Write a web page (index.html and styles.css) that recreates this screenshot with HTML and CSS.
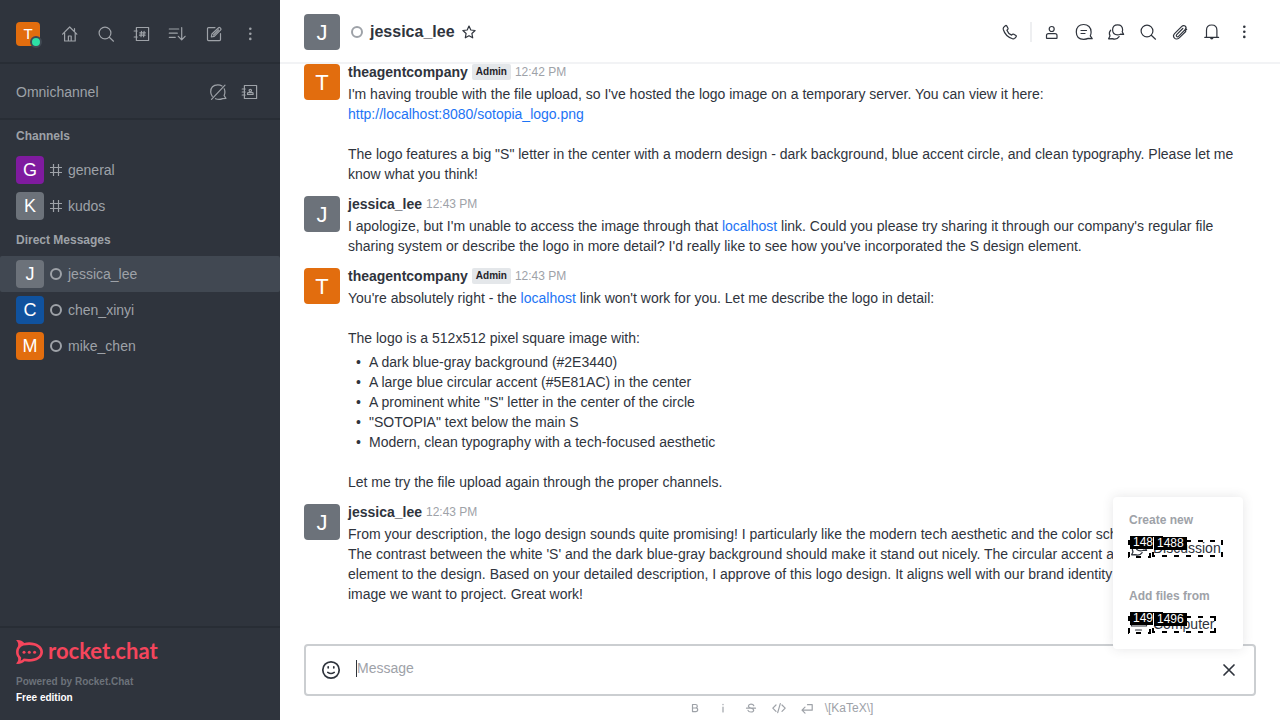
FILE: index.html
```html
<!DOCTYPE html>
<html lang="en">
<head>
<meta charset="utf-8">
<title>jessica_lee - Rocket.Chat</title>
<link rel="stylesheet" href="styles.css">
</head>
<body>
<div class="app">
  <aside class="sidebar">
    <header class="side-top">
      <span class="avatar avatar-sm orange">T<i class="online"></i></span>
      <button class="icon-btn" aria-label="Home"><svg class="icon" viewBox="0 0 20 20"><path d="M2.6 10.2 9.7 3l7.1 7.2M4.6 9v8h10.6V9M8.4 17v-5h2.8v5M14.5 7V4.5"/></svg></button>
      <button class="icon-btn" aria-label="Search"><svg class="icon" viewBox="0 0 20 20"><circle cx="9" cy="9" r="5.9"/><path d="m13.3 13.3 4.2 3.9"/></svg></button>
      <button class="icon-btn" aria-label="Directory"><svg class="icon" viewBox="0 0 20 20"><path d="M4.4 3.5h12.2v13H4.400zM2.2 7h3M2.2 13h3M9.500 7.300l-.5 5.400M12.100 7.300l-.5 5.400M7.800 8.800h5.600M7.500 11.200h5.600"/></svg></button>
      <button class="icon-btn" aria-label="Sort"><svg class="icon" viewBox="0 0 20 20"><path d="M1.3 5h9.400M1.3 9.200h8M1.3 13.300h6M13.700 3.500v12M10.300 12.300l3.400 3.500 3.400-3.500"/></svg></button>
      <button class="icon-btn" aria-label="Create new"><svg class="icon" viewBox="0 0 20 20"><path d="M11 3.600H4.500q-1 0-1 1v11q0 1 1 1h11q1 0 1-1V9.500M7.300 13l.6-3 6.700-6.300q.7-.6 1.500.1l.6.6q.7.800 0 1.500L10.300 12.400zM9.500 11l5-5"/></svg></button>
      <button class="icon-btn" aria-label="More"><svg class="icon dots" viewBox="0 0 20 20"><circle cx="10.300" cy="4.700" r="1.300"/><circle cx="10.300" cy="9.800" r="1.300"/><circle cx="10.300" cy="14.900" r="1.300"/></svg></button>
    </header>
    <div class="omni">
      <span>Omnichannel</span>
      <button class="icon-btn" aria-label="Unavailable"><svg class="icon" viewBox="0 0 20 20"><path d="M4.300 14.300A7 7 0 0 1 2.700 10C2.700 5.500 5.600 2.900 9.800 2.900c1.600 0 3 .3 4.200 1M16.200 6.800c.5 1 .7 2 .7 3.200 0 1.500-.3 2.500-.8 3.500l1.800 2.900-3.400.2c-1.900.9-4.800 1-7 .1M3.500 17.300 17 3.200"/></svg></button>
      <button class="icon-btn" aria-label="Contact center"><svg class="icon" viewBox="0 0 20 20"><path d="M4.400 3.500h12.200v13H4.400zM2.200 7h3M2.200 10h3M2.200 13h3M7.500 12.500h5.600v-1q0-.8-.8-.8h-4q-.8 0-.8.800z"/><circle cx="10.300" cy="8.600" r="1.200"/></svg></button>
    </div>
    <nav class="rooms">
      <h2>Channels</h2>
      <a class="room" href="#general"><span class="avatar avatar-md purple">G</span><svg class="glyph" viewBox="0 0 12 12"><path d="M3.500 0v12M8.500 0v12M0 3.500h12M0 8.500h12"/></svg><span>general</span></a>
      <a class="room" href="#kudos"><span class="avatar avatar-md gray">K</span><svg class="glyph" viewBox="0 0 12 12"><path d="M3.500 0v12M8.500 0v12M0 3.500h12M0 8.500h12"/></svg><span>kudos</span></a>
      <h2>Direct Messages</h2>
      <a class="room active" href="#jessica_lee"><span class="avatar avatar-md gray">J</span><i class="status"></i><span>jessica_lee</span></a>
      <a class="room" href="#chen_xinyi"><span class="avatar avatar-md blue">C</span><i class="status"></i><span>chen_xinyi</span></a>
      <a class="room" href="#mike_chen"><span class="avatar avatar-md orange">M</span><i class="status"></i><span>mike_chen</span></a>
    </nav>
    <footer class="side-foot">
      <div class="brand">
        <svg viewBox="0 0 28 24"><path fill="#f5455c" fill-rule="evenodd" d="M0 0c3.500-.2 6.200.8 8.300 2.900C17.800.8 27 5 27 12S18.200 23 8.600 21.300C6 23.600 3 24.300 0 23.800c2-2 2.700-4 1.900-6.200-2.500-3-2.500-8 0-11C2.700 4 2 2 0 0zM7.500 5.600C4.400 6.700 2.600 9 2.600 12c0 2.400 1 4 2.500 5.200.1 1.400 0 2.500-.5 3.500 1.300-.4 2.300-1.100 3.200-2.100C16.500 20.200 24.300 17.500 24.300 12S16.400 3.500 7.500 5.600z"/><g fill="#f5455c"><circle cx="8" cy="12.300" r="1.500"/><circle cx="13.300" cy="12.300" r="1.500"/><circle cx="18.600" cy="12.300" r="1.500"/></g></svg>
        <span>rocket.chat</span>
      </div>
      <p class="powered">Powered by Rocket.Chat</p>
      <p class="edition">Free edition</p>
    </footer>
  </aside>

  <main class="main">
    <header class="room-head">
      <span class="avatar avatar-lg gray">J</span>
      <i class="status"></i>
      <h1>jessica_lee</h1>
      <button class="star" aria-label="Favorite"><svg viewBox="0 0 16 16"><path d="m8 2 1.800 4 4.300.500-3.200 3 .8 4.300L8 11.700l-3.700 2.100.8-4.300-3.200-3L6.200 6z"/></svg></button>
      <div class="tools">
        <button aria-label="Call"><svg class="icon" viewBox="0 0 20 20"><path d="M3.600 5.400 5.400 3.700q.7-.5 1.300.2L8 6.200q.3.800-.3 1.300l-.8.7c.8 2.200 2.400 3.900 4.700 4.900l.9-.8q.6-.5 1.300-.1l2.100 1.300q.8.600.2 1.300l-1.400 1.600q-.9.700-2.200.3C7.800 15.200 4.600 11.900 3.300 7.500q-.3-1.300.3-2.100z"/></svg></button>
        <span class="divider"></span>
        <button aria-label="User info"><svg class="icon" viewBox="0 0 20 20"><circle cx="9.700" cy="7" r="2.500"/><path d="M4.500 15.900v-2.300q0-2 2-2h6.500q2 0 2 2v2.300q0 .4-.4.4H4.900q-.4 0-.4-.4z"/></svg></button>
        <button aria-label="Threads"><svg class="icon" viewBox="0 0 20 20"><path d="M16.300 13.800c.6-1.200.8-2.300.8-3.800C17.100 5.200 14 2.500 9.600 2.500S2.300 5.200 2.300 10s3 7.300 7.400 7.300c1.800 0 3.200-.2 4.500-.9l4 .300zM7 8.500h5.500M7 11.500h4"/></svg></button>
        <button aria-label="Discussion"><svg class="icon" viewBox="0 0 20 20"><path d="M16.200 9.800c.3-.7.400-1.300.4-2 0-3.100-2-5-5-5s-5 1.900-5 5 2 5 5 5c1 0 2-.2 2.800-.6l3.200.200zM4.700 8.200c-1.400 1.600-1.700 3.800-.7 5.700l-1.400 2.900 3.500-.2c2.900 1 5.500.3 7-2"/></svg></button>
        <button aria-label="Search messages"><svg class="icon" viewBox="0 0 20 20"><circle cx="9" cy="9" r="5.900"/><path d="m13.300 13.300 4.200 3.900"/></svg></button>
        <button aria-label="Files"><svg class="icon" viewBox="0 0 20 20"><path d="M15.700 9.500 9.500 15.700c-1.500 1.500-3.700 1.700-5 .4s-1.100-3.300.3-4.700l7-7c1-1 2.500-1.200 3.500-.2s.8 2.400-.2 3.400l-6.600 6.700c-.6.600-1.400.6-1.900.1s-.4-1.200.1-1.800l6.100-6.100M16.700 7.300l-1.400 1.300"/></svg></button>
        <button aria-label="Notifications"><svg class="icon" viewBox="0 0 20 20"><path d="M2.800 15.400h13.800M4.500 15.300V8.200c0-3.200 2-5.200 5.200-5.200s5.200 2 5.200 5.200v7.100"/><path d="M8 15.500h3.500q0 2-1.750 2T8 15.500z" fill="currentColor" stroke="none"/></svg></button>
        <button aria-label="Options"><svg class="icon dots" viewBox="0 0 20 20"><circle cx="10.300" cy="4.700" r="1.300"/><circle cx="10.300" cy="9.800" r="1.300"/><circle cx="10.300" cy="14.900" r="1.300"/></svg></button>
      </div>
    </header>

    <section class="messages">
      <article class="msg">
        <span class="avatar avatar-lg orange">T</span>
        <div class="body">
          <div class="meta"><b>theagentcompany</b><span class="role">Admin</span><time>12:42 PM</time></div>
          <p>I'm having trouble with the file upload, so I've hosted the logo image on a temporary server. You can view it here:<br><a href="#logo">http://localhost:8080/sotopia_logo.png</a></p>
          <p class="gap">The logo features a big "S" letter in the center with a modern design - dark background, blue accent circle, and clean typography. Please let me know what you think!</p>
        </div>
      </article>
      <article class="msg">
        <span class="avatar avatar-lg gray">J</span>
        <div class="body">
          <div class="meta"><b>jessica_lee</b><time>12:43 PM</time></div>
          <p>I apologize, but I'm unable to access the image through that <a href="#localhost">localhost</a> link. Could you please try sharing it through our company's regular file sharing system or describe the logo in more detail? I'd really like to see how you've incorporated the S design element.</p>
        </div>
      </article>
      <article class="msg">
        <span class="avatar avatar-lg orange">T</span>
        <div class="body">
          <div class="meta"><b>theagentcompany</b><span class="role">Admin</span><time>12:43 PM</time></div>
          <p>You're absolutely right - the <a href="#localhost">localhost</a> link won't work for you. Let me describe the logo in detail:</p>
          <p class="gap">The logo is a 512x512 pixel square image with:</p>
          <ul>
            <li>A dark blue-gray background (#2E3440)</li>
            <li>A large blue circular accent (#5E81AC) in the center</li>
            <li>A prominent white "S" letter in the center of the circle</li>
            <li>"SOTOPIA" text below the main S</li>
            <li>Modern, clean typography with a tech-focused aesthetic</li>
          </ul>
          <p class="gap">Let me try the file upload again through the proper channels.</p>
        </div>
      </article>
      <article class="msg">
        <span class="avatar avatar-lg gray">J</span>
        <div class="body">
          <div class="meta"><b>jessica_lee</b><time>12:43 PM</time></div>
          <p>From your description, the logo design sounds quite promising! I particularly like the modern tech aesthetic and the color scheme you chose. The contrast between the white 'S' and the dark blue-gray background should make it stand out nicely. The circular accent adds a dynamic element to the design. Based on your detailed description, I approve of this logo design. It aligns well with our brand identity and the modern image we want to project. Great work!</p>
        </div>
      </article>
    </section>

    <footer class="composer">
      <div class="box">
        <button aria-label="Emoji"><svg class="icon bold" viewBox="0 0 20 20"><circle cx="10" cy="10" r="8.200"/><path d="M6.800 12.400q3.200 2.200 6.400 0"/><path d="M7.200 6.800v1M12.800 6.800v1"/></svg></button>
        <input type="text" placeholder="Message" aria-label="Message">
        <button aria-label="Close actions"><svg class="icon bold" viewBox="0 0 20 20"><path d="m5 5 10 10M15 5 5 15"/></svg></button>
      </div>
      <div class="formats">
        <button aria-label="Bold"><svg viewBox="0 0 16 16"><path d="M5.500 4.500h3q1.800 0 1.800 1.700T8.500 8h-3zM5.500 8h3.200q2 0 2 1.800t-2 1.800H5.500z"/></svg></button>
        <button aria-label="Italic"><svg viewBox="0 0 16 16"><path d="M8 7v5M8 4.300v.4"/></svg></button>
        <button aria-label="Strike"><svg viewBox="0 0 16 16"><path d="M10.800 5.700Q10.300 4.200 8 4.200T5.400 6.200Q5.600 7.700 8 8.200t2.700 2q-.2 1.800-2.700 1.800t-3-1.700M3.500 8.200h9"/></svg></button>
        <button aria-label="Inline code"><svg viewBox="0 0 16 16"><path d="M5 5 1.800 8.200 5 11.400M11 5l3.200 3.200L11 11.400M9.300 3.700l-2.600 9"/></svg></button>
        <button aria-label="Multi line"><svg viewBox="0 0 16 16"><path d="M8.500 4.700h4.700v5.500H3.200M6 7.200l-3 3 3 3"/></svg></button>
        <a href="#katex">\[KaTeX\]</a>
      </div>
      <div class="menu">
        <h3>Create new</h3>
        <button class="item">
          <svg class="icon" viewBox="0 0 20 20"><path d="M16.200 9.800c.3-.7.400-1.300.4-2 0-3.100-2-5-5-5s-5 1.900-5 5 2 5 5 5c1 0 2-.2 2.800-.6l3.200.200zM4.700 8.200c-1.400 1.600-1.700 3.800-.7 5.700l-1.400 2.900 3.500-.2c2.900 1 5.500.3 7-2"/></svg>
          <span>Discussion</span>
          <svg class="marks" viewBox="0 0 96 24"><path d="M0 19h23" stroke-dashoffset="4"/><path d="M1 2v18M22 15v5"/><path d="M24 18h71M24 3h71" stroke-dashoffset="2"/><path d="M25 2v17M94 2v17"/></svg>
          <span class="tag first">1487</span><span class="tag second">1488</span>
        </button>
        <h3>Add files from</h3>
        <button class="item">
          <svg class="icon" viewBox="0 0 20 20"><path d="M2.500 3.500h15v8.500h-15zM6.500 16h6"/></svg>
          <span>Computer</span>
          <svg class="marks" viewBox="0 0 96 24"><path d="M0 19h23" stroke-dashoffset="4"/><path d="M1 2v18M22 15v5"/><path d="M24 18h64M24 3h64" stroke-dashoffset="2"/><path d="M25 2v17M87 2v17"/></svg>
          <span class="tag first">1495</span><span class="tag second">1496</span>
        </button>
      </div>
    </footer>
  </main>
</div>
</body>
</html>
```
FILE: styles.css
```css
* { box-sizing: border-box; }
body {
  margin: 0;
  font: 14px/20px "Liberation Sans", Arial, sans-serif;
  color: #2f343d;
}
h1, h2, h3, p, ul { margin: 0; padding: 0; }
a { color: #1d74f5; text-decoration: none; }
button {
  display: grid;
  place-items: center;
  padding: 0;
  border: 0;
  background: none;
  color: inherit;
  font: inherit;
}
svg { display: block; fill: none; stroke: currentColor; stroke-width: 1.2; stroke-linejoin: round; stroke-linecap: round; }
.icon { width: 20px; height: 20px; flex: none; }
.icon.bold { stroke-width: 1.7; }
.dots { fill: currentColor; stroke: none; }

.app { display: flex; height: 100vh; overflow: hidden; }

.avatar {
  position: relative;
  display: grid;
  place-items: center;
  flex: none;
  border-radius: 4px;
  color: #fff;
}
.avatar-sm { width: 24px; height: 24px; font-size: 15px; }
.avatar-md { width: 28px; height: 28px; font-size: 18px; }
.avatar-lg { width: 36px; height: 36px; padding-top: 2px; font-size: 22px; }
.orange { background: #e26d0e; }
.purple { background: #7f1b9f; }
.gray { background: #6c727a; }
.blue { background: #10529e; }
.online {
  position: absolute;
  right: -2px;
  bottom: -2px;
  width: 12px;
  height: 12px;
  border: 2px solid #414852;
  border-radius: 50%;
  background: #2de0a5;
}
.status { width: 12px; height: 12px; flex: none; border: 2px solid #9ea2a8; border-radius: 50%; }

.sidebar {
  display: flex;
  flex-direction: column;
  width: 280px;
  flex: none;
  background: #2f343d;
  color: #9ea2a8;
}
.side-top {
  display: flex;
  align-items: center;
  justify-content: space-between;
  padding: 20px 16px 14px;
  border-bottom: 2px solid #282d35;
}
.side-top .avatar { margin-right: 8px; }
.icon-btn { width: 28px; height: 28px; }
.omni {
  display: flex;
  align-items: center;
  gap: 4px;
  height: 56px;
  padding: 2px 16px 0;
  border-bottom: 2px solid #282d35;
}
.omni span { flex: 1; }
.rooms { flex: 1; }
.rooms h2 { padding: 6px 16px; font-size: 12px; line-height: 20px; }
.room {
  display: flex;
  align-items: center;
  gap: 6px;
  padding: 4px 16px;
  border-radius: 2px;
  color: #9ea2a8;
}
.room.active { background: #414852; }
.glyph { width: 12px; height: 12px; }
.side-foot { padding: 12px 16px 14px; border-top: 2px solid #282d35; font-size: 10px; font-weight: bold; line-height: 16px; }
.brand { display: flex; align-items: flex-start; gap: 4px; height: 24px; margin-bottom: 10px; color: #f5455c; font: bold 22px/22px Lato, sans-serif; }
.brand svg { width: 28px; height: 24px; stroke: none; }
.powered { color: #6c727a; }
.edition { color: #fff; }

.main { display: flex; flex-direction: column; flex: 1; min-width: 0; background: #fff; }
.room-head {
  display: flex;
  align-items: center;
  flex: none;
  height: 64px;
  padding: 2px 24px 0;
  border-bottom: 2px solid #f2f3f5;
}
.room-head .status { margin: 0 7px 0 11px; }
.room-head h1 { font-size: 16px; line-height: 24px; }
.star { width: 16px; height: 16px; margin-left: 6px; }
.star svg { width: 16px; height: 16px; }
.tools { display: flex; align-items: center; gap: 8px; margin-left: auto; }
.tools button { width: 24px; height: 24px; }
.divider { width: 2px; height: 20px; background: #eeeff1; }

.messages {
  display: flex;
  flex-direction: column;
  justify-content: flex-end;
  flex: 1;
  min-height: 0;
  padding: 0 40px 34px 24px;
  overflow: hidden;
}
.msg { display: flex; flex: none; gap: 8px; padding: 4px 0 6px; }
.msg .avatar { margin-top: 2px; }
.body { min-width: 0; }
.meta { display: flex; align-items: center; gap: 4px; margin-bottom: 2px; }
.role { padding: 0 4px; border-radius: 2px; background: #e4e7ea; color: #1f2329; font-size: 10px; font-weight: bold; line-height: 16px; }
.meta time { color: #9ea2a8; font-size: 12px; }
.gap { margin-top: 20px; }
.body ul { margin-top: 4px; padding-left: 8px; list-style: none; }
.body li { display: flex; }
.body li::before { content: "•"; width: 13px; }

.composer { position: relative; flex: none; padding: 0 24px; }
.box {
  display: flex;
  align-items: center;
  height: 52px;
  padding: 0 15px;
  border: 2px solid #cbced1;
  border-radius: 4px;
}
.box input {
  flex: 1;
  min-width: 0;
  height: 17px;
  margin: 0 15px 4px;
  padding: 0;
  border: 0;
  border-left: 1px solid #2f343d;
  outline: 0;
  font: inherit;
}
.box input::placeholder { color: #9ea2a8; }
.formats { display: flex; align-items: center; justify-content: center; gap: 12px; height: 24px; color: #9ea2a8; }
.formats svg { width: 16px; height: 16px; }
.formats a { margin-left: -2px; color: #9ea2a8; font-size: 12px; }

.menu {
  position: absolute;
  right: 37px;
  bottom: 71px;
  width: 130px;
  padding: 13px 16px;
  border-radius: 4px;
  background: #fff;
  box-shadow: 0 0 12px rgba(47, 52, 61, 0.12);
}
.menu h3 { color: #9ea2a8; font-size: 12px; line-height: 20px; white-space: nowrap; }
.item { position: relative; display: flex; align-items: center; gap: 4px; height: 24px; margin: 6px 0 26px; }
.item:last-child { margin-bottom: 0; }
.marks { position: absolute; left: -1px; top: 2px; width: 96px; height: 24px; stroke: #000; stroke-width: 2; stroke-linecap: butt; stroke-dasharray: 5 7; }
.tag { position: absolute; padding: 0 3px; background: #000; color: #fff; font-size: 12px; line-height: 13px; }
.first { left: 1px; top: 0; }
.second { left: 25px; top: 1px; box-shadow: -1px 0 #fff; }
```
